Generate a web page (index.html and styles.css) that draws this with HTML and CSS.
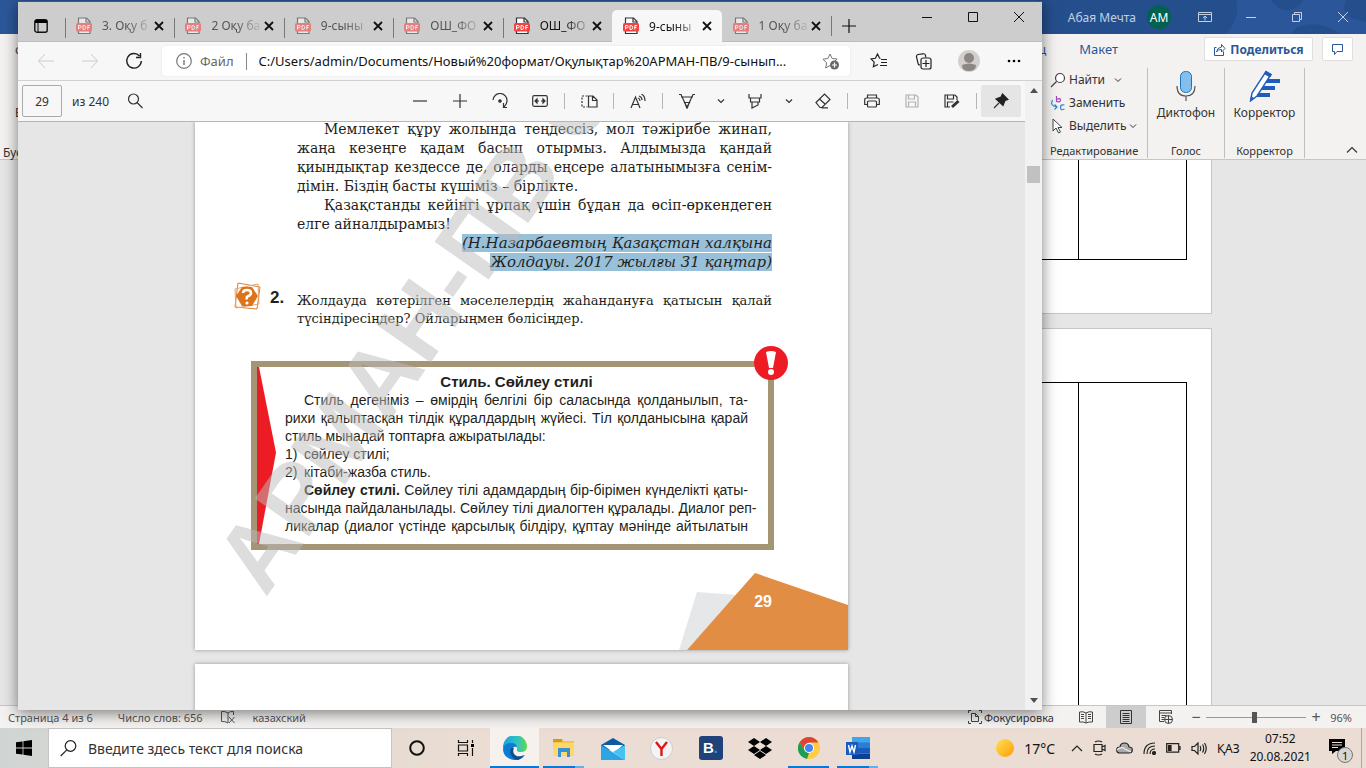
FILE: index.html
```html
<!DOCTYPE html>
<html lang="ru">
<head>
<meta charset="utf-8">
<title>Рабочий стол</title>
<link rel="stylesheet" href="styles.css">
</head>
<body>
<svg class="sprite" aria-hidden="true">
  <symbol id="pdf" viewBox="0 0 16 18"><path d="M2.500 1h8L14 4.500V16.500h-11.500z" fill="#fff" stroke="#333" stroke-width="1.200"/><path d="M10 1v4h4" fill="none" stroke="#333" stroke-width="1.200"/><rect x="0" y="6" width="16" height="8.500" rx="1.500" fill="#f8403f"/><path d="M2.500 12.500v-4h1.500q1.200 0 1.200 1.200T4 10.900H2.500M7 8.500v4h1q1.800-.3 1.800-2T8 8.500zM11.800 12.500v-4h2.200M11.800 10.500h1.800" fill="none" stroke="#fff" stroke-width="1"/></symbol>
  <symbol id="x" viewBox="0 0 12 12"><path d="M2 2l8 8M10 2l-8 8" stroke="#111" stroke-width="1.800" fill="none"/></symbol>
  <symbol id="chev" viewBox="0 0 8 8"><path d="M1 2.500l3 3 3-3" stroke="#333" fill="none"/></symbol>
</svg>
<main class="desktop">
  <section class="word">
    <header class="word-title">
      <svg class="title-art" viewBox="0 0 330 34" preserveAspectRatio="none" aria-hidden="true"><path d="M0 0h200q5 18-10 34H0zM235 0q8 12 18 10t14-10zM260 28q20-10 45 6h-50zM310 0q-8 18 20 22V0z" fill="#244a86" opacity=".7"/></svg>
      <span class="user">Абая Мечта</span><span class="avatar">AM</span>
      <button class="cap" aria-label="Параметры ленты"><svg width="14" height="12" viewBox="0 0 14 12"><path d="M.5 1.500h13v9H.500zM.5 3.500h13M7 9.500V5M5 7l2-2 2 2"/></svg></button>
      <button class="cap" aria-label="Свернуть"><svg width="12" height="12" viewBox="0 0 12 12"><path d="M1 6.500h10"/></svg></button>
      <button class="cap" aria-label="Восстановить"><svg width="12" height="12" viewBox="0 0 12 12"><path d="M3.500 3V1.500h7v7H9M1.500 3.500h7v7h-7z"/></svg></button>
      <button class="cap" aria-label="Закрыть"><svg width="12" height="12" viewBox="0 0 12 12"><path d="M1 1l10 10M11 1L1 11"/></svg></button>
    </header>
    <div class="word-tabs">
      <span class="cut">с</span>
      <nav class="rtabs"><a href="#">Конструктор таблиц</a><a href="#">Макет</a></nav>
      <button class="wbtn share"><svg width="13" height="13" viewBox="0 0 13 13"><path d="M3.500 4.500h-2v8h9v-4M3.500 9q.5-4.500 5-5V1.500l3.500 4-3.500 3.500V6.500Q5 6 3.500 9z" fill="none" stroke="#2b579a"/></svg>Поделиться</button>
      <button class="wbtn note" aria-label="Примечания"><svg width="13" height="13" viewBox="0 0 13 13"><path d="M1.500 1.500h10v7H6l-2.500 3v-3h-2z" fill="none" stroke="#2b579a"/></svg></button>
    </div>
    <div class="ribbon">
      <div class="clip"><span>Е</span><span>Буфер</span></div>
      <div class="group edit">
        <button class="cmd"><svg width="16" height="16" viewBox="0 0 16 16"><circle cx="10" cy="6" r="4.500" fill="#fff" stroke="#444" stroke-width="1.200"/><path d="M6.500 9.500L1 15" stroke="#444" stroke-width="1.200"/></svg>Найти<svg class="wide" width="8" height="8"><use href="#chev"/></svg></button>
        <button class="cmd"><svg width="16" height="16" viewBox="0 0 16 16" fill="none"><path d="M6.500 1v6M6.500 4.500q4-2 4 .5t-4 1.500" stroke="#a845b8" stroke-width="1.200"/><path d="M2.500 5Q-.5 11 7 12M4.500 9.500L7 12l-2.500 2.500" stroke="#2f86c8" stroke-width="1.200"/><path d="M14.500 10q-4-1-4 2.500t4 1.500" stroke="#2f86c8" stroke-width="1.200"/></svg>Заменить</button>
        <button class="cmd"><svg width="16" height="16" viewBox="0 0 16 16"><path d="M3 1v12l3-3 2.500 5 2-1L8 9.500h4z" fill="#fff" stroke="#444"/></svg>Выделить<svg width="8" height="8"><use href="#chev"/></svg></button>
        <span class="gname">Редактирование</span>
      </div>
      <div class="group voice">
        <button class="big"><svg width="22" height="32" viewBox="0 0 22 32"><rect x="5.500" y="1.500" width="11" height="21" rx="5" fill="#83beec" stroke="#1e76be"/><path d="M2 16q0 10 9 10t9-10M11 26v5" fill="none" stroke="#555" stroke-width="1.200"/></svg>Диктофон</button>
        <span class="gname">Голос</span>
      </div>
      <div class="group corr">
        <button class="big"><svg width="32" height="32" viewBox="0 0 32 32"><path d="M20 9h12v4H17zM16 16h11v4H12zM11 23h11v4H7z" fill="#1e5dbe"/><path d="M18 1.500l5 3L9 26l-6.500 5L4 23z" fill="#fff" stroke="#1e5dbe" stroke-width="1.400"/><path d="M18 1l6 3.500-2 3-6-3.500zM2 31l1-5 3 2z" fill="#1e5dbe"/></svg>Корректор</button>
        <span class="gname">Корректор</span>
      </div>
      <button class="collapse" aria-label="Свернуть ленту"><svg width="12" height="8" viewBox="0 0 12 8"><path d="M1 6.500l5-5 5 5" fill="none" stroke="#333" stroke-width="1.200"/></svg></button>
    </div>
    <div class="doc">
      <div class="sheet first"><table><tr><td></td><td></td></tr></table></div>
      <div class="sheet second"><table><tr><td></td><td></td></tr></table></div>
    </div>
    <footer class="status">
      <span class="st1">Страница 4 из 6</span><span class="st2">Число слов: 656</span>
      <svg width="14" height="14" viewBox="0 0 14 14"><path d="M7 3Q4 1 .5 1.500v10Q4 11 7 13M7 3Q9 1 12.500 1.500V5M7 3v10M8 7l5.500 6M13.500 7L8 13" fill="none" stroke="#555"/></svg>
      <span class="st3">казахский</span>
      <button class="focus"><svg width="14" height="14" viewBox="0 0 14 14"><path d="M3 .5H.5V3M11 .5h2.500V3M3 13.500H.5V11M11 13.500h2.500V11M3.500 3.500h4l3 3v5h-7zM7.500 3.500v3h3" fill="none" stroke="#444"/></svg>Фокусировка</button>
      <button class="view" aria-label="Чтение"><svg width="14" height="13" viewBox="0 0 14 13"><path d="M7 2Q4 0 .5 1v10q4-.5 6.500 1 3-1.500 6.500-1V1Q10 0 7 2v10M2 3.500h3M2 5.500h3M2 7.500h3M9 3.500h3M9 5.500h3M9 7.500h3" fill="none" stroke="#444"/></svg></button>
      <button class="view on" aria-label="Разметка страницы"><svg width="12" height="14" viewBox="0 0 12 14"><path d="M.5.500h11v13H.500zM2.500 3.500h7M2.500 5.500h7M2.500 7.500h7M2.500 9.500h7M2.500 11.500h7" fill="none" stroke="#333"/></svg></button>
      <button class="view" aria-label="Веб-документ"><svg width="14" height="14" viewBox="0 0 14 14"><path d="M5 11.500H.5V.5h12V4M.5 3h12M2.500 5.500h5M2.500 7.500h3M2.500 9.500h3" fill="none" stroke="#444"/><circle cx="9.500" cy="9.500" r="4" fill="#eee" stroke="#444"/><path d="M5.500 9.500h8M9.500 5.500v8" stroke="#444"/></svg></button>
      <button class="zoomb" aria-label="Уменьшить">−</button><input class="slider" type="range" min="0" max="100" value="48" aria-label="Масштаб"><button class="zoomb" aria-label="Увеличить">+</button><span class="pct">96%</span>
    </footer>
  </section>

  <section class="browser">
    <header class="tabbar">
      <button class="tabmenu" aria-label="Меню вкладок"><svg width="14" height="14" viewBox="0 0 14 14"><rect x=".8" y=".8" width="12.400" height="12.400" rx="2" fill="none" stroke="#111" stroke-width="1.400"/><path d="M1 1h12v3H1z"/><path d="M4 4v9" stroke="#111"/></svg></button>
      <div class="tabs">
        <div class="tab dim"><svg class="ic" width="16" height="18"><use href="#pdf"/></svg><span class="tt">3. Оқу б</span><button class="tx" aria-label="Закрыть"><svg width="12" height="12"><use href="#x"/></svg></button></div>
        <div class="tab dim"><svg class="ic" width="16" height="18"><use href="#pdf"/></svg><span class="tt">2 Оқу ба</span><button class="tx" aria-label="Закрыть"><svg width="12" height="12"><use href="#x"/></svg></button></div>
        <div class="tab dim"><svg class="ic" width="16" height="18"><use href="#pdf"/></svg><span class="tt">9-сыны</span><button class="tx" aria-label="Закрыть"><svg width="12" height="12"><use href="#x"/></svg></button></div>
        <div class="tab dim"><svg class="ic" width="16" height="18"><use href="#pdf"/></svg><span class="tt">ОШ_ФО</span><button class="tx" aria-label="Закрыть"><svg width="12" height="12"><use href="#x"/></svg></button></div>
        <div class="tab"><svg class="ic" width="16" height="18"><use href="#pdf"/></svg><span class="tt">ОШ_ФО</span><button class="tx" aria-label="Закрыть"><svg width="12" height="12"><use href="#x"/></svg></button></div>
        <div class="tab active"><svg class="ic" width="16" height="18"><use href="#pdf"/></svg><span class="tt">9-сыны</span><button class="tx" aria-label="Закрыть"><svg width="12" height="12"><use href="#x"/></svg></button></div>
        <div class="tab dim"><svg class="ic" width="16" height="18"><use href="#pdf"/></svg><span class="tt">1 Оқу ба</span><button class="tx" aria-label="Закрыть"><svg width="12" height="12"><use href="#x"/></svg></button></div>
      </div>
      <button class="newtab" aria-label="Новая вкладка"><svg width="14" height="14" viewBox="0 0 14 14"><path d="M7 0v14M0 7h14" stroke="#111" stroke-width="1.200"/></svg></button>
      <div class="wincaps">
        <button aria-label="Свернуть"><svg width="10" height="10" viewBox="0 0 10 10"><path d="M0 5.500h10"/></svg></button>
        <button aria-label="Развернуть"><svg width="10" height="10" viewBox="0 0 10 10"><path d="M.5.500h9v9h-9z"/></svg></button>
        <button aria-label="Закрыть"><svg width="10" height="10" viewBox="0 0 10 10"><path d="M0 0l10 10M10 0L0 10"/></svg></button>
      </div>
    </header>
    <div class="address">
      <button class="nav" aria-label="Назад"><svg width="18" height="16" viewBox="0 0 18 16"><path d="M17 8H1.500M8 1L1.500 8 8 15" fill="none" stroke="#ccc"/></svg></button>
      <button class="nav" aria-label="Вперёд"><svg width="18" height="16" viewBox="0 0 18 16"><path d="M1 8h15.500M10 1l6.500 7-6.500 7" fill="none" stroke="#ccc"/></svg></button>
      <button class="nav" aria-label="Обновить"><svg width="18" height="18" viewBox="0 0 18 18"><path d="M14.500 4A7.300 7.300 0 1 0 16.300 9M15.500 1v4.500H11" fill="none" stroke="#222" stroke-width="1.400"/></svg></button>
      <div class="urlbox">
        <svg width="16" height="16" viewBox="0 0 16 16"><circle cx="8" cy="8" r="7.300" fill="none" stroke="#777" stroke-width="1.200"/><path d="M8 7v5M8 4v1.500" stroke="#777" stroke-width="1.400"/></svg>
        <span class="scheme">Файл</span>
        <input class="url" type="text" aria-label="Адрес" value="C:/Users/admin/Documents/Новый%20формат/Оқулықтар%20АРМАН-ПВ/9-сынып...">
        <button aria-label="В избранное"><svg width="18" height="17" viewBox="0 0 18 17"><path d="M8 1l2.100 4.500 5 .5-3.700 3.400M8 12.500L3.700 15l1-5L1 6.200l4.900-.7L8 1" fill="none" stroke="#777"/><circle cx="12.500" cy="12" r="4.500" fill="#666"/><path d="M12.500 9.500v5M10 12h5" stroke="#fff" stroke-width="1.200"/></svg></button>
      </div>
      <button class="tool" aria-label="Избранное"><svg width="18" height="16" viewBox="0 0 18 16"><path d="M10.500 5.500L9.500 5 7.500 1 5.400 5.300 1 6l3.200 3.200-.8 4.600L8 11.500M11 6.500h6M11 9.500h6M10 12.500h7" fill="none" stroke="#222" stroke-width="1.200"/></svg></button>
      <button class="tool" aria-label="Коллекции"><svg width="17" height="17" viewBox="0 0 17 17"><path d="M5 12Q3 12 3 10L1.500 4q-.3-2 1.500-2.500L8 .8q2-.3 2.500 1.500l.3 2" fill="none" stroke="#222" stroke-width="1.200"/><rect x="6" y="5" width="10" height="11" rx="2" fill="#f7f7f7" stroke="#222" stroke-width="1.200"/><path d="M11 7v7M7.500 10.500h7" stroke="#222" stroke-width="1.200"/></svg></button>
      <button class="tool" aria-label="Профиль"><svg width="22" height="22" viewBox="0 0 22 22"><circle cx="11" cy="11" r="11" fill="#d3cfcc"/><circle cx="11" cy="8" r="5" fill="#8b8785"/><path d="M4 15q7-3 14 0 0 6-7 6t-7-6z" fill="#8b8785"/></svg></button>
      <button class="tool" aria-label="Параметры"><svg width="14" height="4" viewBox="0 0 14 4"><circle cx="2" cy="2" r="1.300"/><circle cx="7" cy="2" r="1.300"/><circle cx="12" cy="2" r="1.300"/></svg></button>
    </div>
    <div class="viewer">
      <div class="pane">
        <div class="pdfbar">
          <input class="pageno" type="text" value="29" aria-label="Страница"><span class="of">из 240</span>
          <button class="find" aria-label="Найти"><svg width="16" height="16" viewBox="0 0 16 16"><circle cx="6.500" cy="6" r="5"/><path d="M10 9.500l5.500 5.500"/></svg></button>
          <div class="tools">
            <button aria-label="Уменьшить"><svg width="14" height="14" viewBox="0 0 14 14"><path d="M0 7h14"/></svg></button>
            <button aria-label="Увеличить"><svg width="14" height="14" viewBox="0 0 14 14"><path d="M0 7h14M7 0v14"/></svg></button>
            <button aria-label="Повернуть"><svg width="16" height="16" viewBox="0 0 16 16"><path d="M1 7a7 7 0 0 1 14 1q0 3-3 6M11.500 10v4.500H15"/><circle cx="8" cy="8" r="1.200" fill="#333"/></svg></button>
            <button aria-label="По ширине"><svg width="16" height="12" viewBox="0 0 16 12"><rect x=".7" y=".7" width="14.600" height="10.600" rx="1.500"/><path d="M3 6h4M9 6h4"/><path d="M5 4L3 6l2 2zM11 4l2 2-2 2z" fill="#333"/></svg></button>
            <i></i>
            <button aria-label="Вид страницы"><svg width="17" height="13" viewBox="0 0 17 13"><path d="M6.500 1H1v11h5.500" stroke-dasharray="2 1.500"/><path d="M7.500 1H12l4 4v7H7.500zM11.500 1v4.500H16"/></svg></button>
            <i></i>
            <button aria-label="Прочесть вслух"><svg width="16" height="15" viewBox="0 0 16 15"><path d="M1 14L5.500 3 10 14M2.500 10.500h6M9 2q3 1 3 4M11.500 0Q15 2 15 7M8 4q2 .5 2 3"/></svg></button>
            <i></i>
            <button aria-label="Рисование"><svg width="16" height="16" viewBox="0 0 16 16"><path d="M0 1.500h2l6 13 6-13h2M2 4h12M5.500 9.500h5l-2.500 5z"/><path d="M7 13l1 2 1-2z" fill="#333"/></svg></button>
            <button class="small" aria-label="Цвет пера"><svg width="8" height="8"><use href="#chev"/></svg></button>
            <button aria-label="Выделение"><svg width="14" height="16" viewBox="0 0 14 16"><path d="M1 1v4h12V1M2.500 5v4h9V5M4 9v6l6-3V9"/></svg></button>
            <button class="small" aria-label="Цвет выделения"><svg width="8" height="8"><use href="#chev"/></svg></button>
            <button aria-label="Ластик"><svg width="16" height="16" viewBox="0 0 16 16"><path d="M1 9.500L9.500 1 15 6.500 7 14.500H5zM4.500 6l6 5.500M6.500 14.800H13"/></svg></button>
            <i></i>
            <button aria-label="Печать"><svg width="16" height="14" viewBox="0 0 16 14"><path d="M3.500 4V1h9v3M3.500 10.500H.7V6q0-2 2-2h10.600q2 0 2 2v4.500h-2.800"/><rect x="3.500" y="7" width="9" height="6" rx="1"/></svg></button>
            <button class="off" aria-label="Сохранить"><svg width="14" height="14" viewBox="0 0 14 14"><path d="M1 1h10l2 2v10H1zM3.500 1v4h6V1M3.500 13V8h7v5"/></svg></button>
            <button aria-label="Сохранить как"><svg width="16" height="15" viewBox="0 0 16 15"><path d="M6 13H1V1h10l2 2v3M3.500 1v4h6V1M3.500 13V8h6"/><path d="M14.500 7L8 13" stroke-width="3"/></svg></button>
            <i></i>
            <button class="pin" aria-label="Закрепить"><svg width="16" height="16" viewBox="0 0 16 16"><path d="M9.500 1l5.500 5.500-3 1-2 5-7-6.500 5-2z" fill="#222" stroke="#222"/><path d="M6 10L1 15"/></svg></button>
          </div>
        </div>
        <div class="pages">
          <article class="page" lang="kk">
            <svg class="corner" viewBox="0 0 169 77" aria-hidden="true"><path d="M18 19l40 3-50 55H0z" fill="#e6e7e8"/><path d="M76 0l93 32v45H8z" fill="#e18e44"/></svg>
            <span class="folio">29</span>
            <div class="speech">
              <p class="ind just">Мемлекет құру жолында теңдессіз, мол тәжірибе жинап,</p>
              <p class="just">жаңа кезеңге қадам басып отырмыз. Алдымызда қандай</p>
              <p class="just">қиындықтар кездессе де, оларды еңсере алатынымызға сенім-</p>
              <p>дімін. Біздің басты күшіміз – бірлікте.</p>
              <p class="ind just">Қазақстанды кейінгі ұрпақ үшін бұдан да өсіп-өркендеген</p>
              <p>елге айналдырамыз!</p>
              <p class="source"><mark>(Н.Назарбаевтың Қазақстан халқына</mark><br><mark>Жолдауы. 2017 жылғы 31 қаңтар)</mark></p>
            </div>
            <div class="task">
              <svg width="28" height="28" viewBox="0 0 28 28" aria-hidden="true"><path d="M5 1l22 4-3 22-22-2z" fill="#fff" stroke="#dd8034"/><path d="M2 7l23-5 1 20-23 4z" fill="none" stroke="#e8a36c"/><path d="M9 5h10l6 9-6 10H9L3 14z" fill="#dc741c"/><path d="M10 11q0-3 4-3t4 3q0 2-2.500 3T14 17.500" fill="none" stroke="#fff" stroke-width="2.500"/><circle cx="14" cy="21" r="1.600" fill="#fff"/></svg>
              <b>2.</b>
              <div class="ask"><p class="just">Жолдауда көтерілген мәселелердің жаһандануға қатысын қалай</p><p>түсіндіресіңдер? Ойларыңмен бөлісіңдер.</p></div>
            </div>
            <div class="rule">
              <svg class="arrow" viewBox="0 0 19 178" preserveAspectRatio="none" aria-hidden="true"><path d="M0 0h2l17 86L2 178H0z" fill="#ed1c24"/></svg>
              <svg class="bang" viewBox="0 0 34 34" aria-hidden="true"><circle cx="17" cy="17" r="17" fill="#ed1c24"/><path d="M12 6q5-2 10 0l-3 16h-4z" fill="#fff"/><circle cx="17" cy="26" r="3" fill="#fff"/></svg>
              <h2>Стиль. Сөйлеу стилі</h2>
              <p class="ind just">Стиль дегеніміз – өмірдің белгілі бір саласында қолданылып, та-</p>
              <p class="just">рихи қалыптасқан тілдік құралдардың жүйесі. Тіл қолданысына қарай</p>
              <p>стиль мынадай топтарға ажыратылады:</p>
              <p class="item"><span>1)</span>сөйлеу стилі;</p>
              <p class="item"><span>2)</span>кітаби-жазба стиль.</p>
              <p class="ind just"><b>Сөйлеу стилі.</b> Сөйлеу тілі адамдардың бір-бірімен күнделікті қаты-</p>
              <p class="just">насында пайдаланылады. Сөйлеу тілі диалогтен құралады. Диалог реп-</p>
              <p class="just">ликалар (диалог үстінде қарсылық білдіру, құптау мәнінде айтылатын</p>
            </div>
            <span class="watermark">АРМАН-ПВ С</span>
          </article>
          <div class="page next"></div>
        </div>
      </div>
      <div class="scroll"><svg width="8" height="5" viewBox="0 0 8 5"><path d="M4 0l4 5H0z"/></svg><span class="thumb"></span><svg class="down" width="8" height="5" viewBox="0 0 8 5"><path d="M0 0h8L4 5z"/></svg></div>
    </div>
  </section>

  <footer class="taskbar">
    <button class="start" aria-label="Пуск"><svg width="16" height="16" viewBox="0 0 16 16"><path d="M0 2.300L6.600 1.400v6.200H0zM7.400 1.200L16 0v7.600H7.400zM0 8.400h6.600v6.200L0 13.700zM7.400 8.400H16V16l-8.600-1.200z"/></svg></button>
    <label class="search"><svg width="17" height="17" viewBox="0 0 17 17"><circle cx="10.500" cy="6" r="5.300" fill="none" stroke="#222" stroke-width="1.200"/><path d="M6.800 9.800L.7 16" stroke="#222" stroke-width="1.200"/></svg><input type="text" placeholder="Введите здесь текст для поиска" aria-label="Поиск"></label>
    <div class="apps">
      <button aria-label="Кортана"><svg width="16" height="16" viewBox="0 0 16 16"><circle cx="8" cy="8" r="6.800" fill="none" stroke="#111" stroke-width="2"/></svg></button>
      <button aria-label="Представление задач"><svg width="18" height="16" viewBox="0 0 18 16"><path d="M1.500 0v2.500h9V0M1.500 16v-2.500h9V16M1.500 5h9v6h-9zM15.500 0v3M15.500 8v8" fill="none" stroke="#111" stroke-width="1.200"/><path d="M14 4h3v3h-3z"/></svg></button>
      <button class="run current" aria-label="Edge"><svg width="24" height="24" viewBox="0 0 24 24"><defs><linearGradient id="eg"><stop stop-color="#1d9fe0"/><stop offset=".6" stop-color="#30c3c3"/><stop offset="1" stop-color="#63d64b"/></linearGradient></defs><path d="M0 12A12 12 0 0 1 24 10q0 6-6 6-5 0-4-3 1-4-4-4Q4 9 0 12z" fill="url(#eg)"/><path d="M0 13Q1 7 8 7q6 0 6 5-1-2-3-1-5 3-2 7 4 5 12 1-4 6-10 5Q0 22 0 13z" fill="#0b7bd3"/><path d="M8 12q-3 9 7 12 4-1 7-5-6 3-10 0-3-3-1-7z" fill="#124c8d"/></svg></button>
      <button class="run multi" aria-label="Проводник"><svg width="22" height="20" viewBox="0 0 22 20"><path d="M0 1h9l2 2h10v15H1z" fill="#f4c44d"/><path d="M0 1h9v3H0z" fill="#d99712"/><path d="M1 5h20v13H1z" fill="#ffd766"/><path d="M5 10h12v9h-3v-5H8v5H5z" fill="#3491d6"/></svg></button>
      <button aria-label="Почта"><svg width="24" height="23" viewBox="0 0 24 23"><path d="M0 8l12-7 12 7v5H0z" fill="#0c59a5"/><path d="M2 8h20l-9 8z" fill="#fff"/><path d="M0 8l24 15H0z" fill="#2aa6e8"/><path d="M24 8v15L12 15z" fill="#45c3f5"/></svg></button>
      <button aria-label="Яндекс"><svg width="23" height="23" viewBox="0 0 23 23"><circle cx="11.500" cy="11.500" r="11" fill="#f4f4f4" stroke="#ccc"/><path d="M6 5l5.500 7L17 5M11.500 12v7" fill="none" stroke="#df1717" stroke-width="2.400"/></svg></button>
      <button aria-label="Booking"><span class="booking">B<em>.</em></span></button>
      <button aria-label="Dropbox"><svg width="24" height="21" viewBox="0 0 24 21"><path d="M6 0l6 4-6 4-6-4zM18 0l6 4-6 4-6-4zM6 8l6 4-6 4-6-4zM18 8l6 4-6 4-6-4zM12 13l6 4-6 4-6-4z"/></svg></button>
      <button class="run" aria-label="Chrome"><svg width="22" height="22" viewBox="0 0 22 22"><circle cx="11" cy="11" r="11" fill="#fc4"/><path d="M1.500 5.500A11 11 0 0 1 20.500 5.500H11L7 14z" fill="#db4437"/><path d="M1.500 5.500L7 14l4 2-2 6A11 11 0 0 1 1.500 5.500z" fill="#1c9d58"/><circle cx="11" cy="11" r="5" fill="#fff"/><circle cx="11" cy="11" r="4" fill="#4285f4"/></svg></button>
      <button class="run multi" aria-label="Word"><svg width="24" height="22" viewBox="0 0 24 22"><path d="M6 0h18v6H6z" fill="#41a5ee"/><path d="M6 5.500h18V11H6z" fill="#2b7cd3"/><path d="M6 11h18v5.500H6z" fill="#185abd"/><path d="M6 16.500h18V22H6z" fill="#103f91"/><path d="M0 5h12v13H0z" fill="#185abd"/><path d="M2.500 8l1.500 7 2-6 2 6 1.500-7" fill="none" stroke="#fff" stroke-width="1.400"/></svg></button>
    </div>
    <div class="tray">
      <span class="sun"></span><span class="temp">17°C</span>
      <svg width="12" height="8" viewBox="0 0 12 8"><path d="M1 7l5-5 5 5"/></svg>
      <svg width="13" height="16" viewBox="0 0 13 16"><path d="M1 4.500h8v7H1zM9 7l3-1.500v5L9 9M2 2q3.500-2 7 0M2 14q3.500 2 7 0"/></svg>
      <svg width="17" height="12" viewBox="0 0 17 12"><path d="M4 11Q.7 11 .7 8T4 5q.5-4 4.500-4T13 5q3.300 0 3.300 3T13 11z" fill="#aaa"/><path d="M1 8q4-4 8-1l6 3" fill="none" stroke="#eee"/></svg>
      <svg width="13" height="13" viewBox="0 0 13 13"><path d="M1 12Q1 1 12 1M4 12q0-8 8-8M7 12q0-5 5-5"/><circle cx="11" cy="11" r="1.500" fill="#222"/></svg>
      <svg width="15" height="10" viewBox="0 0 15 10"><path d="M.7.700h12v8.500H.700zM14 3v4"/><path d="M2.500 2.500H5v5H2.500z" fill="#222"/></svg>
      <svg width="16" height="13" viewBox="0 0 16 13"><path d="M1 4.500h2.500L7 1v11L3.500 8.500H1zM9 4q1.500 2.500 0 5M11.500 2.500q2.500 4 0 8M13.500 1q3.500 5.500 0 11"/></svg>
      <span class="lang">ҚАЗ</span>
      <time class="clock">07:52<br>20.08.2021</time>
      <button class="notif" aria-label="Уведомления"><svg width="24" height="25" viewBox="0 0 24 25"><path d="M0 0h16v12H7l-4 3v-3H0z"/><path d="M3 3.500h10M3 6h10M3 8.500h6" stroke="#eaddd4"/><circle cx="16" cy="16" r="7.500" fill="#d8d5d2" stroke="#777"/></svg><span>1</span></button>
    </div>
  </footer>
</main>
</body>
</html>
```
FILE: styles.css
```css
* { box-sizing: border-box; }
body { margin: 0; font-family: "Noto Sans", "Open Sans", sans-serif; font-size: 12px; color: #333; }
button { border: 0; padding: 0; background: none; font: inherit; color: inherit; display: flex; align-items: center; justify-content: center; flex: none; }
input { font: inherit; color: inherit; border: 0; outline: 0; min-width: 0; }
p, h2 { margin: 0; }
svg { flex: none; }
.sprite { position: absolute; width: 0; height: 0; }
.desktop { position: relative; height: 100vh; display: flex; flex-direction: column; overflow: hidden; }

/* Word window */
.word { flex: 1; min-height: 0; display: flex; flex-direction: column; background: #f3f2f1; }
.word-title { position: relative; height: 34px; flex: none; display: flex; align-items: center; justify-content: flex-end; background: #2b579a; color: #c3d0e4; }
.title-art { position: absolute; right: 0; top: 0; width: 330px; height: 34px; }
.user, .avatar, .cap { position: relative; }
.avatar { width: 24px; height: 24px; margin: 0 11px; border-radius: 50%; background: #036151; color: #fff; display: flex; align-items: center; justify-content: center; }
.cap { width: 46px; height: 34px; }
.cap svg { fill: none; stroke: #c3d0e4; }
.word-tabs { height: 30px; flex: none; display: flex; align-items: center; padding: 0 13px 0 15px; color: #2b579a; font-size: 13px; }
.cut { color: #444; }
.rtabs { margin-left: auto; display: flex; gap: 33px; margin-right: 86px; }
.rtabs a { color: inherit; text-decoration: none; }
.wbtn { height: 24px; background: #fff; border: 1px solid #e1dfdd; border-radius: 2px; gap: 4px; }
.share { width: 109px; margin-right: 9px; font-weight: bold; font-size: 12px; }
.note { width: 31px; }
.ribbon { height: 96px; flex: none; display: flex; align-items: stretch; padding: 4px 0 1px; border-bottom: 1px solid #c8c6c4; }
.clip { flex: 1; display: flex; flex-direction: column; padding: 36px 0 0 3px; gap: 23px; }
.clip span:first-child { padding-left: 12px; }
.group { display: flex; flex-direction: column; border-right: 1px solid #c0bebc; align-items: center; }
.edit { width: 104px; align-items: flex-start; padding-left: 6px; }
.voice { width: 77px; }
.corr { width: 80px; }
.cmd { height: 23px; gap: 3px; }
.cmd .wide { margin-left: 6px; }
.big { flex-direction: column; gap: 2px; padding-top: 2px; }
.gname { margin-top: auto; line-height: 14px; font-size: 11px; }
.collapse { width: 61px; align-self: flex-end; height: 16px; padding-left: 32px; }
.doc { flex: 1; min-height: 0; overflow: hidden; background: #e6e6e6; display: flex; flex-direction: column; align-items: flex-end; gap: 14px; padding-right: 154px; border-bottom: 1px solid #c6c6c6; }
.sheet { width: 816px; background: #fff; border: 1px solid #c6c6c6; padding: 0 24px 53px 60px; }
.first { flex: none; border-top: 0; }
.second { flex: 1; border-bottom: 0; padding: 53px 24px 0 60px; }
.sheet table { width: 100%; height: 100%; border-collapse: collapse; }
.first table { height: 100px; }
.sheet td { border: 1px solid #000; border-top: 0; }
.second td { border-top: 1px solid #000; border-bottom: 0; }
.sheet td:last-child { width: 108px; }
.status { height: 22px; flex: none; display: flex; align-items: center; padding: 0 14px 0 8px; font-size: 11px; color: #555; background: #f3f2f1; }
.st2 { margin: 0 18px 0 25px; }
.st3 { margin-left: 18px; }
.focus { margin-left: auto; gap: 2px; margin-right: 12px; color: #333; }
.view { width: 40px; height: 22px; }
.on { background: #cdcdcd; }
.zoomb { width: 20px; font-size: 16px; line-height: 20px; }
.slider { appearance: none; width: 100px; height: 12px; margin: 0; background: linear-gradient(#999, #999) center / 100% 1px no-repeat; }
.slider::-webkit-slider-thumb { appearance: none; width: 5px; height: 11px; background: #555; }
.pct { width: 26px; text-align: right; }

/* Browser window */
.browser { position: absolute; left: 18px; right: 324px; top: 1px; bottom: 58px; display: flex; flex-direction: column; background: #f7f7f7; border-top: 1px solid #555; box-shadow: 0 3px 14px rgba(0, 0, 0, .5); }
.tabbar { height: 40px; flex: none; display: flex; background: #cdcdcd; border-bottom: 1px solid #bdbdbd; }
.tabmenu { width: 47px; padding-top: 9px; padding-right: 1px; }
.tabs { width: 766px; display: flex; align-items: flex-end; }
.tab { flex: 1; min-width: 0; height: 31px; display: flex; align-items: center; padding: 0 9px 0 11px; background: linear-gradient(#777, #777) left 8px / 1px 20px no-repeat; }
.tab .ic { margin-right: 10px; }
.tt { flex: 1; min-width: 0; white-space: nowrap; color: #111; mask-image: linear-gradient(90deg, #000 50%, rgba(0, 0, 0, .1)); }
.dim .ic { opacity: .55; }
.dim .tt { color: #555; }
.tx { margin-left: 2px; width: 12px; height: 12px; }
.active { height: 32px; margin-bottom: -1px; background: #f7f7f7; border-radius: 5px 5px 0 0; }
.active + .tab { background: none; }
.newtab { width: 34px; height: 20px; margin-top: 14px; border-left: 1px solid #777; }
.wincaps { margin-left: auto; display: flex; }
.wincaps button { width: 46px; height: 29px; }
.wincaps svg { fill: none; stroke: #111; }
.address { height: 39px; flex: none; display: flex; align-items: center; padding: 0 6px; border-bottom: 1px solid #d0d0d0; }
.nav { width: 44px; height: 30px; }
.urlbox { flex: 1; min-width: 0; height: 30px; margin: 0 6px; background: #fff; border-radius: 4px; display: flex; align-items: center; padding: 0 10px 0 14px; box-shadow: 0 0 2px rgba(0, 0, 0, .1); font-size: 13px; }
.scheme { margin: 0 12px 0 8px; color: #666; }
.url { flex: 1; border-left: 1px solid #888; padding: 0 0 0 12px; height: 17px; color: #111; background: none; }
.tool { width: 45px; height: 30px; }
.viewer { flex: 1; min-height: 0; display: flex; }
.pane { flex: 1; min-width: 0; display: flex; flex-direction: column; }
.pdfbar { height: 41px; flex: none; display: flex; align-items: center; padding: 0 4px; border-bottom: 1px solid #b5b5b5; }
.pageno { width: 40px; height: 32px; border: 1px solid #aaa; border-radius: 2px; text-align: center; background: #f7f7f7; padding: 0; }
.of { margin: 0 16px 0 10px; }
.find { width: 20px; height: 32px; }
.pdfbar svg { fill: none; stroke: #333; stroke-width: 1.2; }
.tools { margin-left: auto; display: flex; align-items: center; }
.tools button { width: 40px; height: 32px; }
.tools .small { width: 28px; }
.tools i { width: 1px; height: 16px; margin: 0 4px; background: #b5b5b5; }
.off { opacity: .35; }
.tools .pin { background: #e5e5e5; border-radius: 2px; }
.pages { flex: 1; min-height: 0; overflow: hidden; background: #e6e6e6; display: flex; flex-direction: column; align-items: center; }
.page { position: relative; flex: none; width: 64%; min-width: 653px; height: 528px; background: #fff; overflow: hidden; box-shadow: 0 0 4px rgba(0, 0, 0, .35); padding: 0 76px 0 102px; font-family: "DejaVu Serif", serif; font-size: 14px; color: #231f20; }
.next { margin-top: 14px; }
.just { text-align-last: justify; white-space: nowrap; }
.speech { line-height: 19px; margin-top: -2px; }
.speech .ind { padding-left: 27px; }
.source { text-align: right; font-style: italic; font-size: 15px; }
.source mark { background: #99c0d9; color: inherit; }
.task { display: flex; margin: 10px 0 0 -64px; }
.task b { width: 36px; padding: 6px 0 0 9px; font: bold 17px/20px "Liberation Sans", sans-serif; }
.ask { flex: 1; font-size: 13px; line-height: 18px; padding-top: 10px; }
.rule { position: relative; margin: 33px -2px 0 -46px; border: 6px solid #a39576; padding: 6px 20px 9px 28px; font: 14px/18px "Liberation Sans", sans-serif; }
.rule h2 { font-size: 15px; line-height: 18px; text-align: center; }
.rule .ind { padding-left: 19px; }
.item { display: flex; }
.item span { width: 19px; }
.arrow { position: absolute; left: 0; top: 0; width: 19px; height: 100%; }
.bang { position: absolute; right: -20px; top: -21px; width: 34px; height: 34px; }
.corner { position: absolute; right: 0; bottom: 0; width: 169px; height: 77px; }
.folio { position: absolute; right: 76px; bottom: 38px; font: bold 16px/20px "Liberation Sans", sans-serif; color: #fff; }
.watermark { position: absolute; left: 73px; bottom: 50px; font: bold 96px/96px "Liberation Sans", sans-serif; height: 84px; white-space: nowrap; color: rgba(188, 188, 188, .5); transform-origin: 0 100%; transform: rotate(-55deg); }
.scroll { width: 17px; flex: none; background: #f1f1f1; display: flex; flex-direction: column; align-items: center; padding: 7px 0; }
.scroll svg { fill: #505050; }
.thumb { width: 13px; height: 17px; margin-top: 73px; background: #c1c1c1; }
.down { margin-top: auto; }

/* Taskbar */
.taskbar { height: 40px; flex: none; display: flex; align-items: stretch; background: linear-gradient(90deg, #d0d5d3, #dbd8d2 12%, #ebddd3 35%, #ebddd3); color: #111; }
.start { width: 48px; }
.search { width: 344px; display: flex; align-items: center; gap: 11px; padding-left: 11px; background: #fff; border: 1px solid #c4c4c4; font-size: 14px; }
.search input { flex: 1; background: none; padding: 0; }
.search input::placeholder { color: #333; opacity: 1; }
.apps { display: flex; }
.apps button { width: 49px; position: relative; }
.run::after { content: ""; position: absolute; left: 4px; right: 4px; bottom: 0; height: 2px; background: #0a78d4; }
.current { background: #f6f1ed; }
.current::after { left: 0; right: 0; }
.multi::after { background: linear-gradient(90deg, #0a78d4 78%, #65aee6 78%); }
.booking { width: 24px; height: 24px; border-radius: 3px; background: #1f427a; color: #fff; font: bold 15px/24px "Liberation Sans", sans-serif; }
.booking em { color: #1ba0e8; font-style: normal; }
.tray { margin-left: auto; display: flex; align-items: center; gap: 10px; padding-right: 8px; border-right: 1px solid #aaa; margin-right: 4px; }
.tray > svg { fill: none; stroke: #222; stroke-width: 1.2; }
.sun { width: 18px; height: 18px; border-radius: 50%; background: linear-gradient(135deg, #ffe04f, #ff9d0a); }
.temp { font-size: 14px; margin-right: 6px; }
.clock { text-align: center; line-height: 18px; margin-right: 8px; }
.notif { position: relative; padding-top: 7px; }
.notif span { position: absolute; left: 13px; top: 16px; font-size: 11px; line-height: 15px; }
```
